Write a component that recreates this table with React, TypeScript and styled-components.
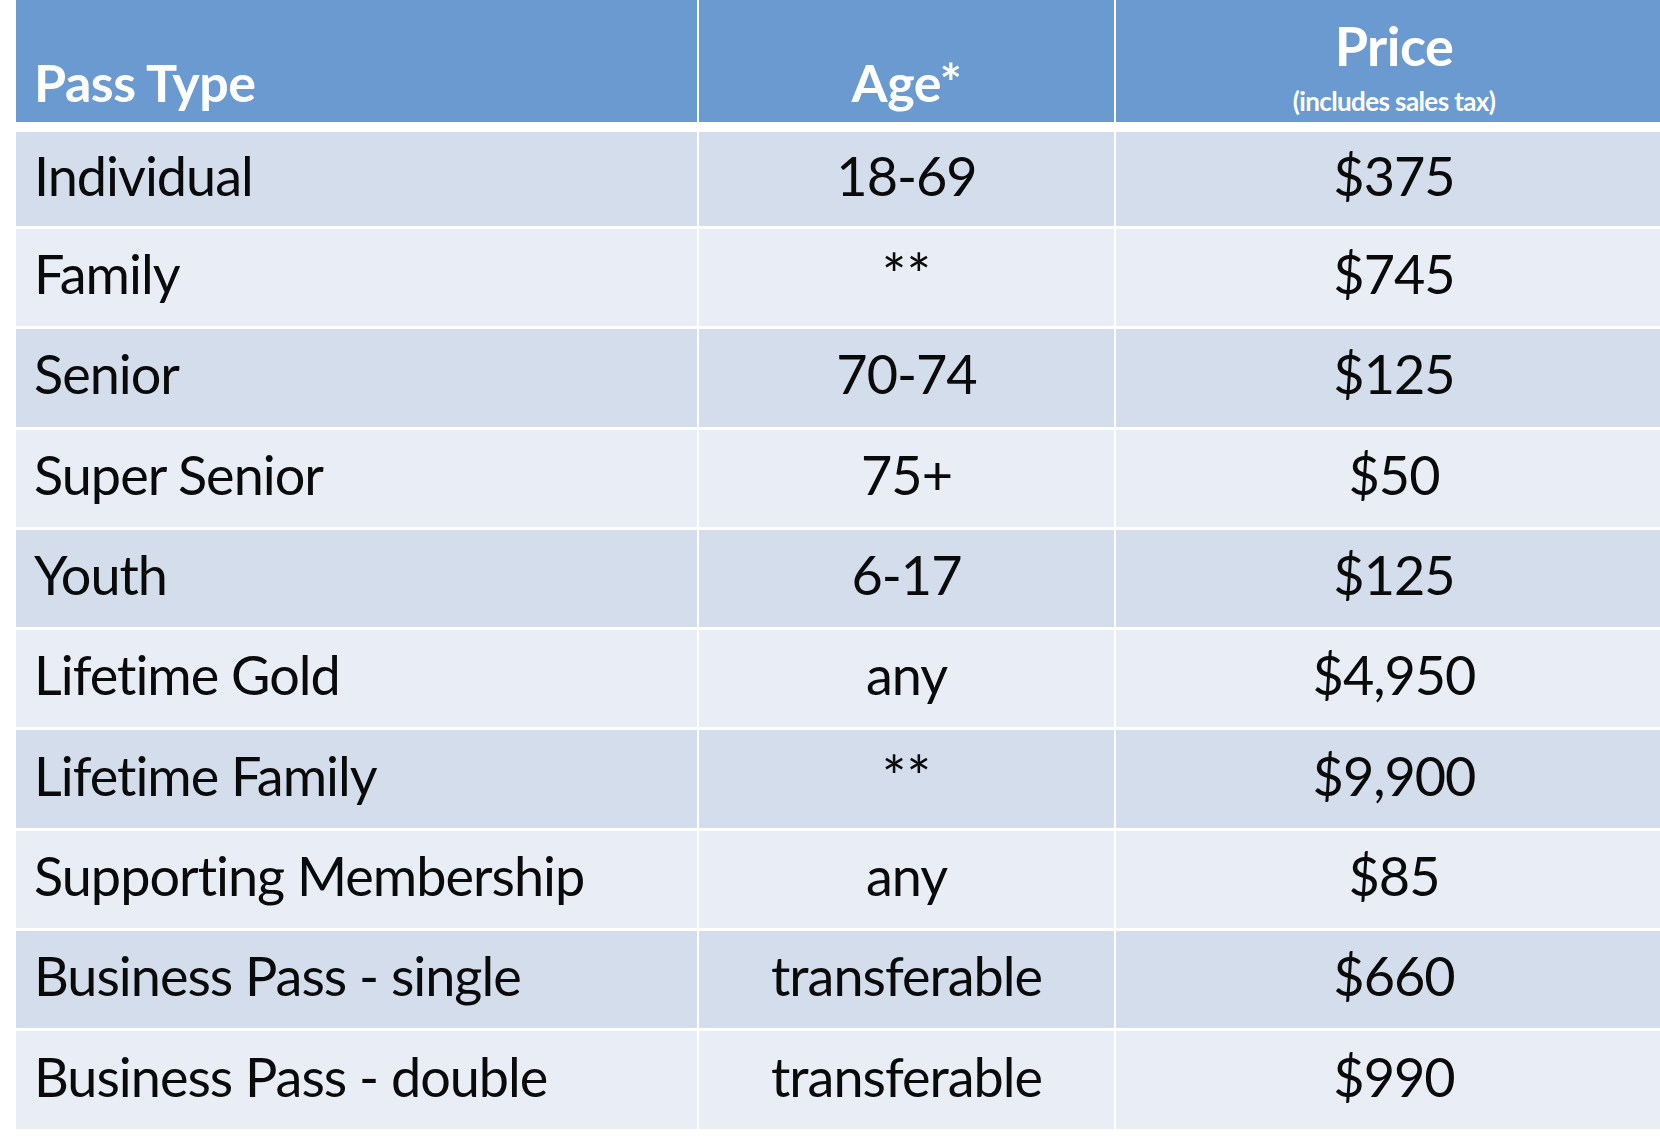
import styled, { createGlobalStyle } from 'styled-components';

const rows = [
	{ type: 'Individual', age: '18-69', price: '$375' },
	{ type: 'Family', age: '**', price: '$745' },
	{ type: 'Senior', age: '70-74', price: '$125' },
	{ type: 'Super Senior', age: '75+', price: '$50' },
	{ type: 'Youth', age: '6-17', price: '$125' },
	{ type: 'Lifetime Gold', age: 'any', price: '$4,950' },
	{ type: 'Lifetime Family', age: '**', price: '$9,900' },
	{ type: 'Supporting Membership', age: 'any', price: '$85' },
	{ type: 'Business Pass - single', age: 'transferable', price: '$660' },
	{ type: 'Business Pass - double', age: 'transferable', price: '$990' },
];

export default function App() {
	return (
		<>
			<GlobalStyle />
			<Table>
				<HeaderRow>
					<HeadCell align='left'>Pass Type</HeadCell>
					<HeadCell align='center'>Age*</HeadCell>
					<HeadCell align='center'>
						<PriceStack>
							<PriceTitle>Price</PriceTitle>
							<SubNote>(includes sales tax)</SubNote>
						</PriceStack>
					</HeadCell>
				</HeaderRow>
				{rows.map((row, i) => (
					<BodyRow key={row.type} shade={i % 2 === 0 ? 'dark' : 'light'} first={i === 0}>
						<Cell align='left'>{row.type}</Cell>
						<Cell align='center'>{row.age === '**' ? <Stars>**</Stars> : row.age}</Cell>
						<Cell align='center'>{row.price}</Cell>
					</BodyRow>
				))}
			</Table>
		</>
	);
}

const GlobalStyle = createGlobalStyle`
	html, body {
		margin: 0;
		padding: 0;
		background: #ffffff;
		overflow: hidden;
	}
	body {
		font-family: Lato, 'Open Sans', sans-serif;
		color: #0a0a0a;
	}
`;

// the table runs a little past the right edge of the page
const Table = styled.div`
	display: flex;
	flex-direction: column;
	width: 1656px;
	margin-left: 16px;
	background: #ffffff;
`;

const columns = '681px 415px 1fr';

const HeaderRow = styled.div`
	display: grid;
	grid-template-columns: ${columns};
	column-gap: 2px;
	height: 122px;
	margin-bottom: 10px;
`;

const HeadCell = styled.div<{ align: 'left' | 'center' }>`
	display: flex;
	align-items: flex-end;
	justify-content: ${({ align }) => (align === 'left' ? 'flex-start' : 'center')};
	padding: 0 0 ${({ align }) => (align === 'left' ? '14px 18px' : '14px 0')};
	background: #6a9acf;
	color: #ffffff;
	font-weight: 700;
	font-size: 52px;
	line-height: 1;
	letter-spacing: -0.5px;
`;

const PriceStack = styled.div`
	display: flex;
	flex-direction: column;
	align-items: center;
	margin-bottom: -6px;
`;

const PriceTitle = styled.span`
	font-size: 54px;
	line-height: 1;
`;

const SubNote = styled.span`
	font-size: 26px;
	line-height: 1;
	letter-spacing: -0.6px;
	margin-top: 15px;
`;

const BodyRow = styled.div<{ shade: 'dark' | 'light'; first: boolean }>`
	display: grid;
	grid-template-columns: ${columns};
	column-gap: 2px;
	height: ${({ first }) => (first ? '94px' : '97.3px')};
	margin-top: ${({ first }) => (first ? '0' : '3px')};
	& > div {
		background: ${({ shade }) => (shade === 'dark' ? '#d3ddeb' : '#e9eef6')};
	}
`;

const Cell = styled.div<{ align: 'left' | 'center' }>`
	display: flex;
	align-items: center;
	justify-content: ${({ align }) => (align === 'left' ? 'flex-start' : 'center')};
	padding: 0 0 8px ${({ align }) => (align === 'left' ? '18px' : '0')};
	font-size: 54px;
	letter-spacing: -1px;
`;

const Stars = styled.span`
	font-size: 58px;
	letter-spacing: 0;
`;
